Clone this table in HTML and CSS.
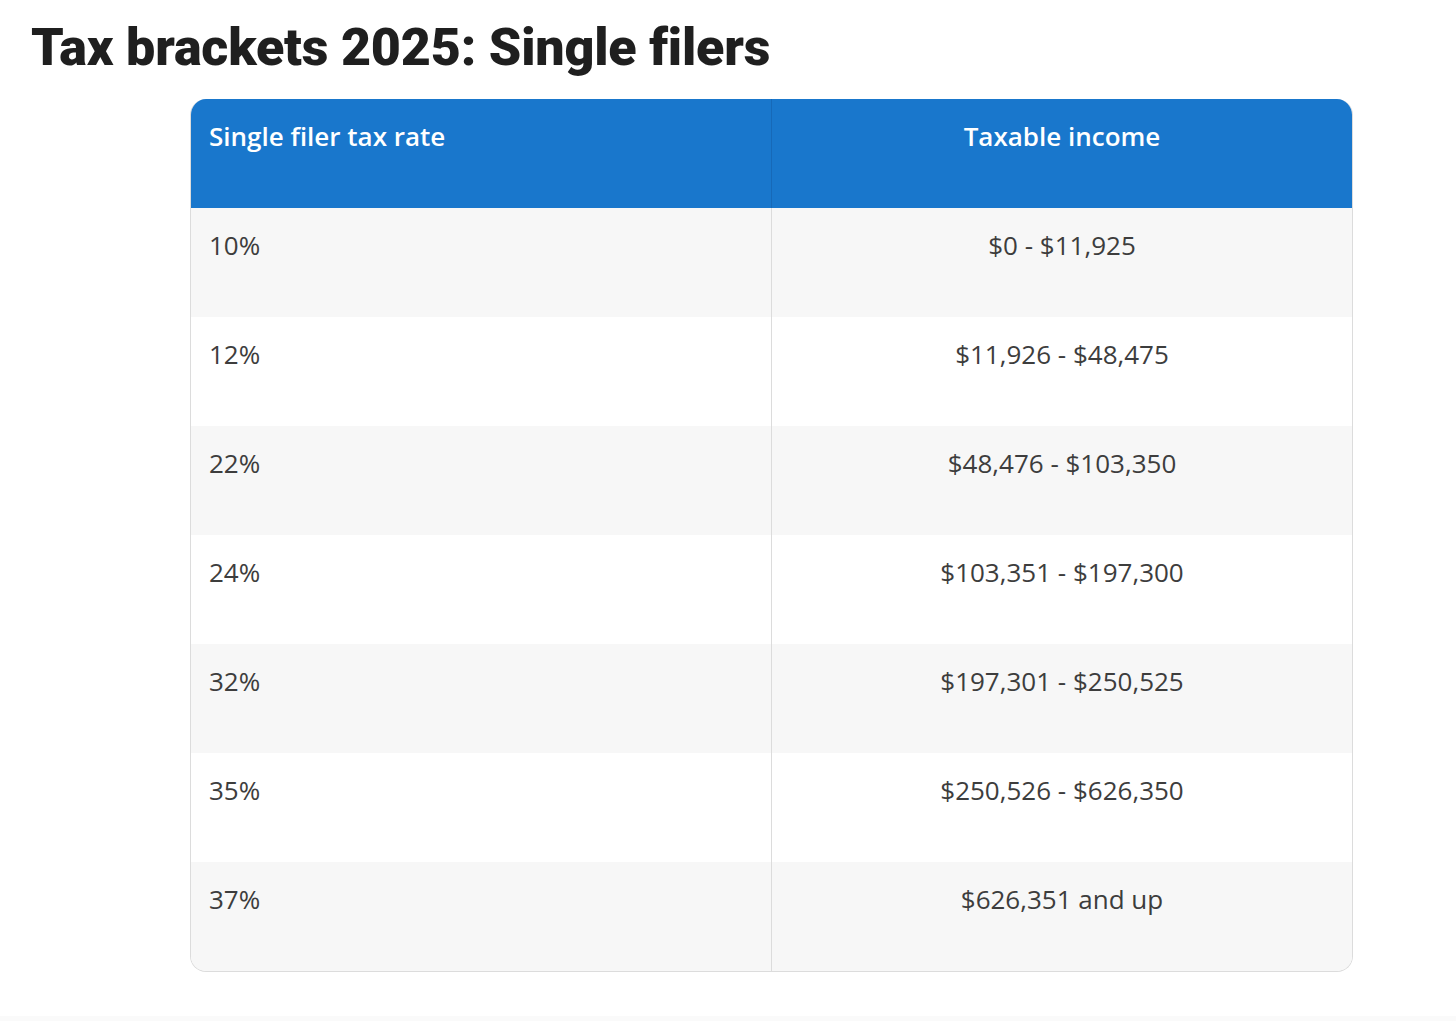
FILE: index.html
```html
<!DOCTYPE html>
<html lang="en">
<head>
<meta charset="utf-8">
<title>Tax brackets 2025: Single filers</title>
<link rel="stylesheet" href="styles.css">
</head>
<body>
<div class="page">
  <h1 class="title">Tax brackets 2025: Single filers</h1>
  <div class="table-wrap">
    <table class="brackets">
      <thead>
        <tr>
          <th class="col-rate">Single filer tax rate</th>
          <th class="col-income">Taxable income</th>
        </tr>
      </thead>
      <tbody>
        <tr><td class="col-rate">10%</td><td class="col-income">$0 - $11,925</td></tr>
        <tr><td class="col-rate">12%</td><td class="col-income">$11,926 - $48,475</td></tr>
        <tr><td class="col-rate">22%</td><td class="col-income">$48,476 - $103,350</td></tr>
        <tr><td class="col-rate">24%</td><td class="col-income">$103,351 - $197,300</td></tr>
        <tr><td class="col-rate">32%</td><td class="col-income">$197,301 - $250,525</td></tr>
        <tr><td class="col-rate">35%</td><td class="col-income">$250,526 - $626,350</td></tr>
        <tr><td class="col-rate">37%</td><td class="col-income">$626,351 and up</td></tr>
      </tbody>
    </table>
  </div>
  <div class="footer-band"></div>
</div>
</body>
</html>
```

FILE: styles.css
```css
html, body {
  margin: 0;
  padding: 0;
  background: #ffffff;
}

.page {
  width: 1456px;
  height: 1021px;
  position: relative;
  overflow: hidden;
}

.title {
  margin: 0;
  padding: 18px 0 0 31px;
  height: 82px;
  box-sizing: border-box;
  font-family: Roboto, "Liberation Sans", sans-serif;
  font-weight: 900;
  font-size: 52px;
  line-height: 60px;
  letter-spacing: -0.2px;
  color: #1f1f1f;
}

.table-wrap {
  margin: 17px 0 0 190px;
  width: 1163px;
  border: 1px solid #dcdcdc;
  border-top: none;
  border-radius: 16px;
  overflow: hidden;
  box-sizing: border-box;
}

.brackets {
  width: 100%;
  border-collapse: collapse;
  table-layout: fixed;
  font-family: "Open Sans", "Liberation Sans", sans-serif;
  font-size: 26px;
}

.brackets th,
.brackets td {
  height: 109px;
  box-sizing: border-box;
  vertical-align: top;
  padding: 18px 18px 0 18px;
  line-height: 38px;
}

.brackets th {
  background: #1977cc;
  color: #ffffff;
  font-weight: 600;
}

.brackets thead tr {
  height: 108px;
}

.brackets th.col-rate {
  text-align: left;
  border-right: 1px solid #1669b8;
}

.brackets th.col-income {
  text-align: center;
}

.brackets td {
  color: #3d3d3d;
  font-weight: 400;
}

.brackets td.col-rate {
  text-align: left;
  border-right: 1px solid #dcdcdc;
}

.brackets td.col-income {
  text-align: center;
}

.brackets tbody tr:nth-child(odd) {
  background: #f7f7f7;
}

.brackets tbody tr:nth-child(even) {
  background: #ffffff;
}

.footer-band {
  position: absolute;
  left: 0;
  right: 0;
  bottom: 0;
  height: 5px;
  background: #fafafa;
}
```
